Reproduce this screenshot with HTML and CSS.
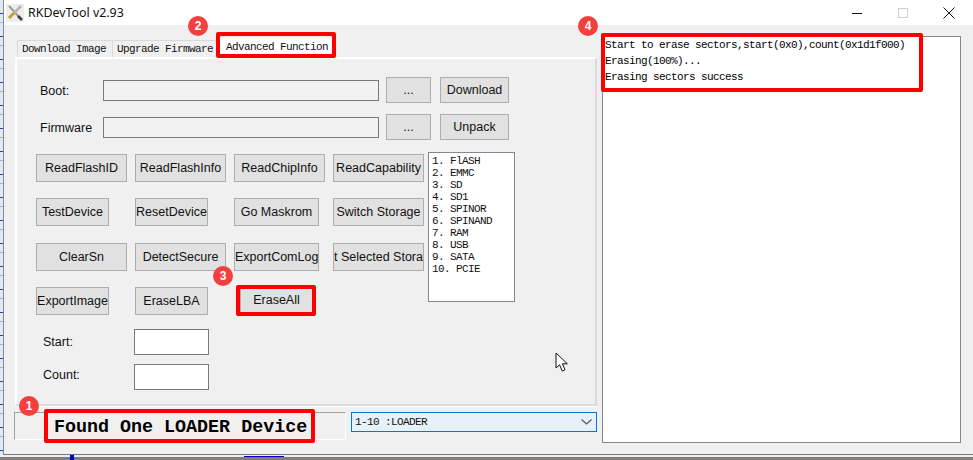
FILE: index.html
```html
<!DOCTYPE html>
<html lang="en">
<head>
<meta charset="utf-8">
<title>RKDevTool v2.93</title>
<link rel="stylesheet" href="styles.css">
</head>
<body>
<div class="screen">
  <div class="desktop-left"></div>
  <div class="window">
    <header class="titlebar">
      <svg class="app-icon" width="18" height="18" viewBox="0 0 18 18">
        <rect x="0" y="0" width="18" height="18" fill="#ededed"/>
        <path d="M3 2 L15 15" stroke="#9a9a9a" stroke-width="2"/>
        <path d="M15 2 L8 9" stroke="#b4b4b4" stroke-width="2.5"/>
        <path d="M8 9 L3 14" stroke="#c99a2e" stroke-width="3"/>
        <path d="M12 12 L16 16" stroke="#3b3b3b" stroke-width="2.5"/>
      </svg>
      <span class="title-text">RKDevTool v2.93</span>
      <div class="controls">
        <svg class="ctl" width="12" height="12" viewBox="0 0 12 12"><path d="M1 6.5H11" stroke="#111" stroke-width="1"/></svg>
        <svg class="ctl" width="12" height="12" viewBox="0 0 12 12"><rect x="1.5" y="1.5" width="9" height="9" fill="none" stroke="#cfcfcf"/></svg>
        <svg class="ctl" width="12" height="12" viewBox="0 0 12 12"><path d="M0.5 0.5L11.5 11.5M11.5 0.5L0.5 11.5" stroke="#111" stroke-width="1"/></svg>
      </div>
    </header>
    <main class="main">
      <section class="left">
        <nav class="tabs">
          <div class="tab tab-first">Download Image</div>
          <div class="tab">Upgrade Firmware</div>
          <div class="tab tab-active">Advanced Function</div>
        </nav>
        <div class="panel">
          <div class="file-row">
            <label class="file-label">Boot:</label>
            <div class="path-input"></div>
            <button class="btn btn-browse">...</button>
            <button class="btn btn-action">Download</button>
          </div>
          <div class="file-row">
            <label class="file-label">Firmware</label>
            <div class="path-input"></div>
            <button class="btn btn-browse">...</button>
            <button class="btn btn-action">Unpack</button>
          </div>
          <div class="tools">
            <div class="btn-grid">
              <button class="btn full">ReadFlashID</button>
              <button class="btn full">ReadFlashInfo</button>
              <button class="btn full">ReadChipInfo</button>
              <button class="btn full">ReadCapability</button>
              <button class="btn short">TestDevice</button>
              <button class="btn short">ResetDevice</button>
              <button class="btn mid">Go Maskrom</button>
              <button class="btn full">Switch Storage</button>
              <button class="btn full">ClearSn</button>
              <button class="btn full">DetectSecure</button>
              <button class="btn mid">ExportComLog</button>
              <button class="btn full clip">t Selected Stora</button>
              <button class="btn short">ExportImage</button>
              <button class="btn short">EraseLBA</button>
              <button class="btn short erase">EraseAll</button>
            </div>
            <ul class="storage">
              <li>1. FlASH</li>
              <li>2. EMMC</li>
              <li>3. SD</li>
              <li>4. SD1</li>
              <li>5. SPINOR</li>
              <li>6. SPINAND</li>
              <li>7. RAM</li>
              <li>8. USB</li>
              <li>9. SATA</li>
              <li>10. PCIE</li>
            </ul>
          </div>
          <div class="range-row range-start">
            <label class="range-label">Start:</label>
            <div class="range-input"></div>
          </div>
          <div class="range-row range-count">
            <label class="range-label">Count:</label>
            <div class="range-input"></div>
          </div>
        </div>
        <div class="status-row">
          <div class="status">Found One LOADER Device</div>
          <div class="combo">
            <span>1-10 :LOADER</span>
            <svg width="11" height="6" viewBox="0 0 11 6"><path d="M0.5 0.5L5.5 5L10.5 0.5" fill="none" stroke="#555" stroke-width="1.2"/></svg>
          </div>
        </div>
      </section>
      <section class="log">
        <p>Start to erase sectors,start(0x0),count(0x1d1f000)</p>
        <p>Erasing(100%)...</p>
        <p>Erasing sectors success</p>
      </section>
    </main>
  </div>
  <div class="desktop-bottom">
    <i class="mark mark-a"></i><i class="mark mark-b"></i>
  </div>

  <div class="callout callout-1"></div>
  <div class="callout callout-2"></div>
  <div class="callout callout-3"></div>
  <div class="callout callout-4"></div>
  <div class="badge badge-1">1</div>
  <div class="badge badge-2">2</div>
  <div class="badge badge-3">3</div>
  <div class="badge badge-4">4</div>
  <svg class="cursor" width="14" height="21" viewBox="0 0 14 21">
    <path d="M1 1V16L4.6 12.8L7.2 19L10 17.8L7.4 11.8H12.4Z" fill="#fff" stroke="#111" stroke-width="1"/>
  </svg>
</div>
</body>
</html>
```
FILE: styles.css
```css
* { box-sizing: border-box; }
html, body { margin: 0; padding: 0; }
body { width: 973px; height: 460px; overflow: hidden; background: #7f8080; }

.screen {
  position: relative;
  width: 973px;
  height: 460px;
  display: grid;
  grid-template-columns: 3px 970px;
  grid-template-rows: 455px 5px;
  font-family: "Liberation Sans", Arial, sans-serif;
  color: #111;
}

.desktop-left {
  background: repeating-linear-gradient(180deg, #dfe9f3 0 13px, #1d3fc8 13px 14px, #dfe9f3 14px 22px, #9fb6d8 22px 23px);
}

.window {
  background: #f0f0f0;
  border-left: 1px solid #8a8a8a;
  border-bottom: 1px solid #7a7a7a;
  display: flex;
  flex-direction: column;
}

.titlebar {
  height: 25px;
  flex: none;
  background: #fff;
  display: flex;
  align-items: center;
  padding-left: 2px;
}
.app-icon { margin-right: 4px; }
.title-text { font-family: "Noto Sans", sans-serif; font-size: 12.4px; color: #111; }
.controls {
  margin-left: auto;
  display: flex;
  gap: 34px;
  padding-right: 18px;
  align-items: center;
}

.main {
  flex: 1;
  display: flex;
  padding: 11px 0 0 10px;
  gap: 5px;
  align-items: flex-start;
}

.left { width: 583px; display: flex; flex-direction: column; padding-top: 2px; }

.tabs {
  display: flex;
  height: 19px;
  padding-left: 1px;
  font-family: "Liberation Mono", monospace;
  font-size: 11px;
  letter-spacing: -0.6px;
  align-items: flex-end;
}
.tab {
  height: 17px;
  padding: 2px 5px 0 4px;
  background: #f0f0f0;
  border: 1px solid #d9d9d9;
  border-bottom: 0;
  white-space: pre;
  margin-left: -1px;
}
.tab-first { padding: 2px 6px 0 4px; margin-left: 2px; }
.tab-active {
  height: 19px;
  background: #fff;
  margin-left: 0;
  padding: 3px 6px 0 7px;
  border: 0;
}

.panel {
  height: 349px;
  background: #f0f0f0;
  border-left: 2px solid #fff;
  border-top: 2px solid #fff;
  border-right: 2px solid #dcdcdc;
  border-bottom: 2px solid #dcdcdc;
  box-shadow: 0 2px 0 -1px #fff;
  margin-left: 1px;
  padding: 18px 0 0 19px;
  font-size: 12.5px;
}

.file-row {
  display: flex;
  align-items: center;
  height: 26px;
  margin-bottom: 11px;
}
.file-label { width: 67px; padding: 2px 0 0 4px; flex: none; }
.path-input {
  width: 276px;
  height: 21px;
  border: 1px solid #7a7a7a;
  background: #f2f2f2;
  margin-right: 7px;
  flex: none;
}

.btn {
  font-family: "Liberation Sans", Arial, sans-serif;
  font-size: 12.5px;
  color: #111;
  background: #e1e1e1;
  border: 1px solid #adadad;
  padding: 0;
  margin: 0;
  height: 27px;
  white-space: nowrap;
  overflow: hidden;
}
.btn-browse { width: 45px; height: 26px; margin-right: 9px; flex: none; }
.btn-action { width: 69px; height: 26px; flex: none; }

.tools {
  display: flex;
  align-items: flex-start;
  margin-top: 14px;
}
.btn-grid {
  width: 392px;
  display: grid;
  grid-template-columns: repeat(4, 99px);
  grid-auto-rows: 28px;
  row-gap: 16.33px;
  flex: none;
}
.full { width: 91px; height: 28px; }
.short { width: 73px; height: 28px; }
.mid { width: 85px; height: 28px; }
.clip { text-overflow: clip; }
.erase { margin-left: 6px; height: 27px; }

.storage {
  list-style: none;
  margin: -2px 0 0 0;
  padding: 2px 0 0 3px;
  width: 87px;
  height: 150px;
  background: #fff;
  border: 1px solid #828790;
  font-family: "Liberation Mono", monospace;
  font-size: 11px;
  letter-spacing: -0.6px;
  line-height: 12px;
}
.storage li { white-space: pre; }

.range-row {
  display: flex;
  align-items: center;
  height: 26px;
  margin-bottom: 9px;
}
.range-start { margin-top: 14px; }
.range-label { width: 98px; padding: 0 0 0 7px; flex: none; }
.range-count .range-label { padding-bottom: 4px; }
.range-input {
  width: 75px;
  height: 26px;
  background: #fff;
  border: 1px solid #7a7a7a;
}

.status-row {
  display: flex;
  align-items: flex-start;
  margin-top: 6px;
  gap: 5px;
}
.status {
  width: 332px;
  height: 28px;
  padding-left: 39px;
  border-left: 1px solid #a0a0a0;
  border-top: 1px solid #a0a0a0;
  border-right: 1px solid #fff;
  border-bottom: 1px solid #fff;
  font-family: "Liberation Mono", monospace;
  font-weight: bold;
  font-size: 18.35px;
  line-height: 29px;
  color: #000;
  white-space: pre;
}
.combo {
  width: 246px;
  height: 20px;
  background: #e5f1fb;
  border: 1px solid #0078d7;
  display: flex;
  align-items: center;
  justify-content: space-between;
  padding: 0 4px 0 3px;
  font-family: "Liberation Mono", monospace;
  font-size: 11px;
  letter-spacing: -0.6px;
  white-space: pre;
}

.log {
  width: 359px;
  height: 407px;
  background: #fff;
  border: 1px solid #828790;
  padding: 0 0 0 2px;
  font-family: "Liberation Mono", monospace;
  font-size: 11px;
  letter-spacing: -0.6px;
  line-height: 16px;
  color: #000;
}
.log p { margin: 0; white-space: pre; }

.desktop-bottom {
  grid-column: 1 / span 2;
  background: linear-gradient(180deg, #efefef 0 2px, #4a8ab8 2px 3px, #7f8080 3px 5px);
  display: flex;
}
.mark { display: block; background: #0000c8; }
.mark-a { width: 4px; height: 5px; margin-left: 70px; }
.mark-b { width: 40px; height: 1px; margin: 1px 0 0 170px; }

.callout {
  position: absolute;
  border: 4px solid #f00;
  border-radius: 2px;
}
.callout-1 { left: 44px; top: 409px; width: 271px; height: 34px; }
.callout-2 { left: 216px; top: 32px; width: 120px; height: 26px; }
.callout-3 { left: 236px; top: 285px; width: 80px; height: 31px; }
.callout-4 { left: 601px; top: 33px; width: 322px; height: 59px; }

.badge {
  position: absolute;
  width: 20px;
  height: 20px;
  border-radius: 50%;
  background: #f43f3f;
  color: #fff;
  font-size: 12px;
  font-weight: bold;
  line-height: 20px;
  text-align: center;
}
.badge-1 { left: 19px; top: 396px; }
.badge-2 { left: 188px; top: 16px; }
.badge-3 { left: 213px; top: 266px; }
.badge-4 { left: 578px; top: 16px; }

.cursor { position: absolute; left: 555px; top: 352px; }
```
